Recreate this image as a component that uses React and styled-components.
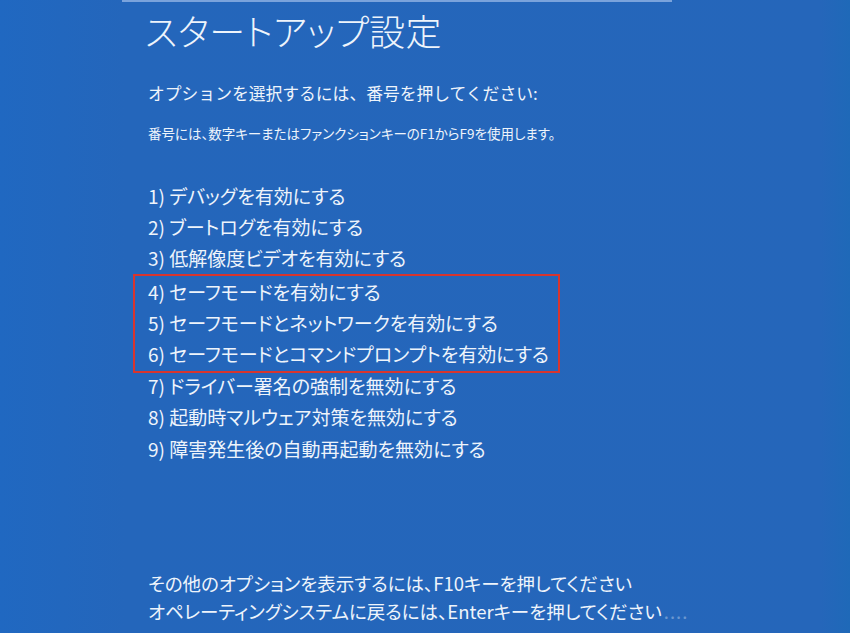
import React from "react";
import styled, { createGlobalStyle } from "styled-components";

const GlobalStyle = createGlobalStyle`
  html, body {
    margin: 0;
    padding: 0;
    background: #2167bf;
  }
  #root {
    width: 850px;
    height: 633px;
    overflow: hidden;
  }
`;

const items = [
  "1) デバッグを有効にする",
  "2) ブートログを有効にする",
  "3) 低解像度ビデオを有効にする",
  "4) セーフモードを有効にする",
  "5) セーフモードとネットワークを有効にする",
  "6) セーフモードとコマンドプロンプトを有効にする",
  "7) ドライバー署名の強制を無効にする",
  "8) 起動時マルウェア対策を無効にする",
  "9) 障害発生後の自動再起動を無効にする",
];

export default function App() {
  const before = items.slice(0, 3);
  const picked = items.slice(3, 6);
  const after = items.slice(6);

  return (
    <>
      <GlobalStyle />
      <Screen>
        <TopEdge />
        <Content>
          <Title>スタートアップ設定</Title>
          <Prompt>オプションを選択するには、番号を押してください:</Prompt>
          <Hint>番号には、数字キーまたはファンクションキーのF1からF9を使用します。</Hint>
          <List>
            {before.map((t) => (
              <Item key={t}>{t}</Item>
            ))}
            <Highlight>
              {picked.map((t) => (
                <Item key={t}>{t}</Item>
              ))}
            </Highlight>
            {after.map((t) => (
              <Item key={t}>{t}</Item>
            ))}
          </List>
          <Footer>
            <FootLine>その他のオプションを表示するには、F10キーを押してください</FootLine>
            <FootLine>
              オペレーティングシステムに戻るには、Enterキーを押してください
              <Faint>....</Faint>
            </FootLine>
          </Footer>
        </Content>
      </Screen>
    </>
  );
}

const Screen = styled.div`
  width: 850px;
  height: 633px;
  display: flex;
  flex-direction: column;
  background: linear-gradient(90deg, #2068c1 0px, #2466bb 125px, #2566ba 820px, #1f69b8 850px);
  color: #eef4fb;
  font-family: "Noto Sans CJK JP", "Noto Sans", sans-serif;
  font-feature-settings: "palt";
`;

const TopEdge = styled.div`
  margin-left: 122px;
  width: 550px;
  height: 2px;
  background: #7aa3dc;
  flex-shrink: 0;
`;

const Content = styled.div`
  flex: 1;
  display: flex;
  flex-direction: column;
  padding: 0 0 8px 148px;
`;

const Title = styled.h1`
  margin: 5px 0 0 -3px;
  font-size: 36px;
  font-weight: 300;
  line-height: 46px;
  letter-spacing: 0.3px;
`;

const Prompt = styled.div`
  margin-top: 28px;
  font-size: 16.8px;
  line-height: 24px;
  font-feature-settings: normal;
`;

const Hint = styled.div`
  margin-top: 19px;
  font-size: 13.5px;
  line-height: 18px;
`;

const List = styled.div`
  margin-top: 38px;
  display: flex;
  flex-direction: column;
`;

const Item = styled.div`
  font-size: 19px;
  line-height: 31.2px;
  white-space: nowrap;
`;

const Highlight = styled.div`
  margin: 0 0 -3px -15px;
  padding: 0 0 2px 13px;
  width: 410px;
  border: 2px solid #d8352e;
`;

const Footer = styled.div`
  margin-top: auto;
  display: flex;
  flex-direction: column;
`;

const FootLine = styled.div`
  font-size: 18.5px;
  line-height: 28px;
  white-space: nowrap;
`;

const Faint = styled.span`
  margin-left: 2px;
  opacity: 0.35;
  letter-spacing: 1px;
`;
